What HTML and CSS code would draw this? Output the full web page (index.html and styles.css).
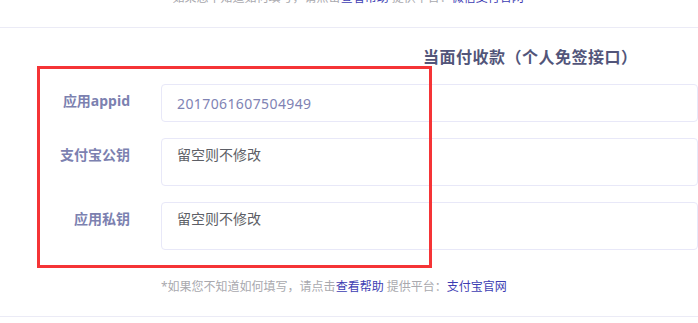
FILE: index.html
```html
<!DOCTYPE html>
<html lang="zh-CN">
<head>
    <meta charset="UTF-8">
    <meta name="viewport" content="width=device-width, initial-scale=1.0">
    <title>支付配置</title>
    <link rel="stylesheet" href="styles.css">
</head>
<body>
    <div class="block block-first">
        <p class="tip tip-top">*如果您不知道如何填写，请点击<a href="#">查看帮助</a> 提供平台：<a href="#">微信支付官网</a></p>
    </div>

    <div class="block">
        <h2 class="block-title">当面付收款（个人免签接口）</h2>

        <form class="pay-form">
            <div class="row">
                <label for="appid">应用appid</label>
                <input type="text" id="appid" class="field" value="2017061607504949">
            </div>
            <div class="row">
                <label for="pubkey">支付宝公钥</label>
                <textarea id="pubkey" class="field field-area" placeholder="留空则不修改"></textarea>
            </div>
            <div class="row">
                <label for="privkey">应用私钥</label>
                <textarea id="privkey" class="field field-area" placeholder="留空则不修改"></textarea>
            </div>
        </form>

        <p class="tip">*如果您不知道如何填写，请点击<a href="#">查看帮助</a> 提供平台：<a href="#">支付宝官网</a></p>
    </div>

    <div class="highlight"></div>
</body>
</html>
```

FILE: styles.css
```css
body {
    margin: 0;
    font-family: "Noto Sans", "Noto Sans CJK SC", sans-serif;
    background-color: #fff;
    overflow: hidden;
    position: relative;
}
.block {
    border-bottom: 1px solid #ebebf6;
    padding-bottom: 19px;
}
.block-first {
    margin-top: -12px;
}
.tip {
    margin: 0;
    font-size: 12px;
    line-height: 20px;
    color: #a9a9ae;
    padding-left: 161px;
}
.tip-top {
    padding-left: 166px;
}
.tip a {
    color: #3d3db3;
    text-decoration: none;
}
.block-title {
    margin: 18px 0 0 423px;
    font-size: 16px;
    line-height: 22px;
    letter-spacing: 0.5px;
    font-weight: bold;
    color: #52557a;
}
.pay-form {
    margin-top: 16px;
    display: flex;
    flex-direction: column;
    gap: 16px;
}
.row {
    display: flex;
    align-items: flex-start;
}
.row label {
    width: 130px;
    flex-shrink: 0;
    text-align: right;
    padding-top: 7px;
    font-size: 14px;
    line-height: 20px;
    font-weight: bold;
    color: #7c81b0;
}
.field {
    margin-left: 31px;
    width: 620px;
    height: 38px;
    box-sizing: border-box;
    border: 1px solid #e8e8f8;
    border-radius: 4px;
    padding: 6px 15px;
    font-family: inherit;
    font-size: 14px;
    line-height: 20px;
    color: #8083b4;
    letter-spacing: 0.4px;
    outline: none;
    background: #fff;
}
.field-area {
    height: 48px;
    resize: none;
    letter-spacing: 0;
}
.field-area::placeholder {
    color: #5d5f66;
}
.pay-form + .tip {
    margin-top: 27px;
}
.highlight {
    position: absolute;
    left: 37px;
    top: 66px;
    width: 395px;
    height: 202px;
    box-sizing: border-box;
    border: 3px solid #f53436;
}
```
